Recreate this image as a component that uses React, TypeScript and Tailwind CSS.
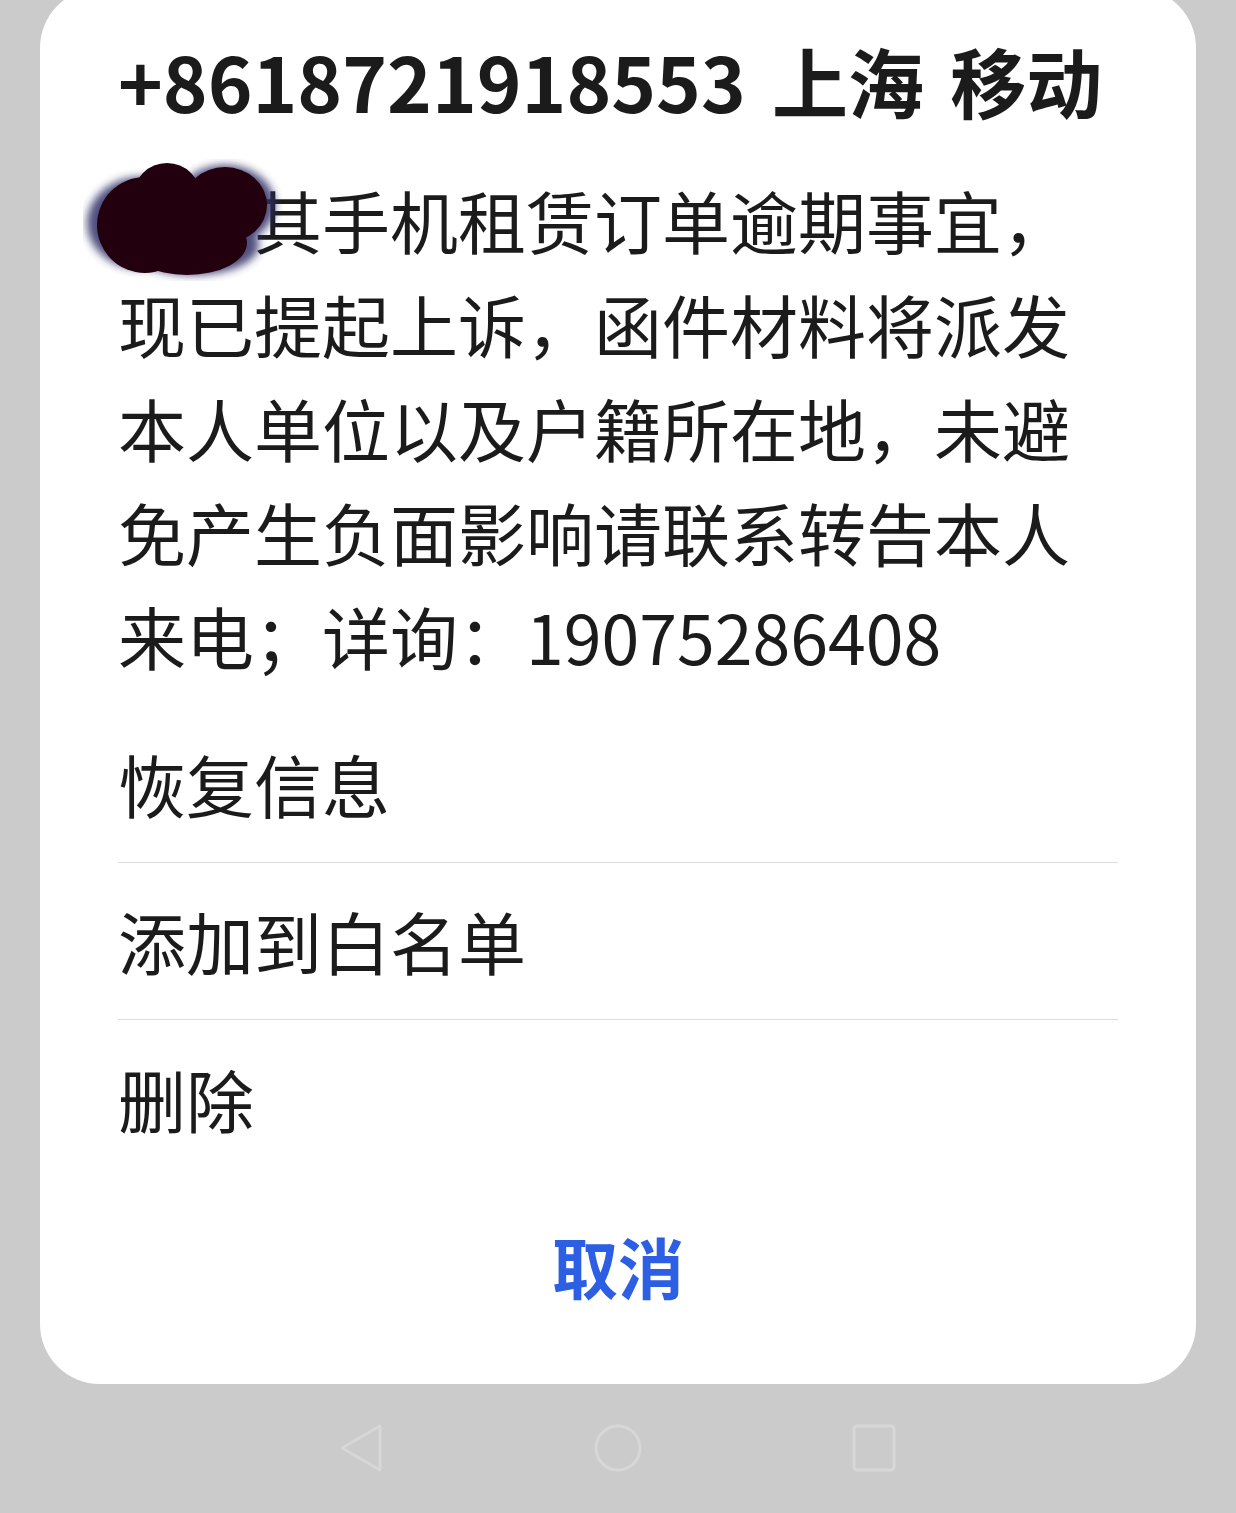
import React from "react";

function Blob() {
  return (
    <svg
      className="absolute left-[-35px] top-[-9px]"
      width="200"
      height="122"
      viewBox="0 0 200 122"
    >
      <defs>
        <filter id="halo" x="-20%" y="-20%" width="140%" height="140%">
          <feGaussianBlur stdDeviation="4.5" />
        </filter>
      </defs>
      <g filter="url(#halo)" fill="#2f2d66" opacity="0.85">
        <ellipse cx="58" cy="64" rx="54" ry="46" />
        <ellipse cx="142" cy="46" rx="50" ry="40" />
        <ellipse cx="110" cy="86" rx="66" ry="30" />
      </g>
      <g fill="#22000e">
        <circle cx="62" cy="66" r="48" />
        <circle cx="84" cy="38" r="34" />
        <ellipse cx="142" cy="46" rx="42" ry="38" />
        <ellipse cx="104" cy="84" rx="60" ry="32" />
      </g>
    </svg>
  );
}

export default function App() {
  const lines = [
    "现已提起上诉，函件材料将派发",
    "本人单位以及户籍所在地，未避",
    "免产生负面影响请联系转告本人",
    "来电；详询：19075286408",
  ];
  const items = ["恢复信息", "添加到白名单", "删除"];
  return (
    <div className="w-[1236px] h-[1513px] bg-[#cbcbcb] overflow-hidden flex flex-col items-center font-['Noto_Sans_CJK_SC','Noto_Sans',sans-serif] text-[#1b1b1b]">
      <div className="-mt-[12px] w-[1156px] bg-white rounded-[60px] px-[78px] pt-[42px] pb-[59px] flex flex-col">
        <div className="text-[76px] leading-[100px] font-bold whitespace-nowrap [word-spacing:9px]">
          +8618721918553 上海 移动
        </div>
        <div className="mt-[38px] text-[68px] leading-[104px] whitespace-nowrap">
          <div className="relative">
            <span className="inline-block w-[136px]" />
            其手机租赁订单逾期事宜，
            <Blob />
          </div>
          {lines.map((l) => (
            <div key={l}>{l}</div>
          ))}
        </div>
        <div className="mt-[18px] flex flex-col">
          {items.map((it, i) => (
            <div
              key={it}
              className={
                "h-[157px] flex items-center text-[68px] " +
                (i < items.length - 1 ? "border-b border-[#dcdcdc]" : "")
              }
            >
              {it}
            </div>
          ))}
        </div>
        <div className="mt-[28px] h-[120px] flex items-center justify-center text-[66px] font-bold text-[#2c5fe3]">
          取消
        </div>
      </div>
      <div className="mt-[40px] flex gap-[208px]">
        <svg width="48" height="48" viewBox="0 0 48 48" fill="none" stroke="#d7d7d7" strokeWidth="3" strokeLinejoin="round">
          <polygon points="42,2 4,24 42,46" />
        </svg>
        <svg width="48" height="48" viewBox="0 0 48 48" fill="none" stroke="#d7d7d7" strokeWidth="3">
          <circle cx="24" cy="24" r="22" />
        </svg>
        <svg width="48" height="48" viewBox="0 0 48 48" fill="none" stroke="#d7d7d7" strokeWidth="3">
          <rect x="4" y="2" width="40" height="44" rx="3" />
        </svg>
      </div>
    </div>
  );
}
